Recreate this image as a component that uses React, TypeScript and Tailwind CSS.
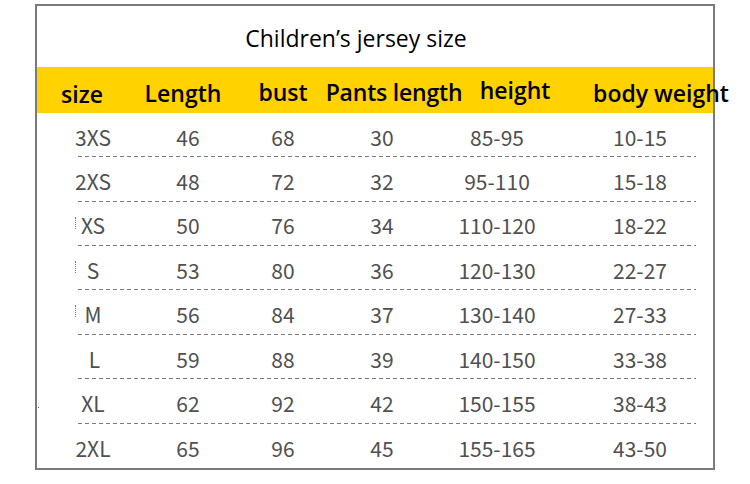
import React from "react";

const rows = [
  ["3XS", "46", "68", "30", "85-95", "10-15"],
  ["2XS", "48", "72", "32", "95-110", "15-18"],
  ["XS", "50", "76", "34", "110-120", "18-22"],
  ["S", "53", "80", "36", "120-130", "22-27"],
  ["M", "56", "84", "37", "130-140", "27-33"],
  ["L", "59", "88", "39", "140-150", "33-38"],
  ["XL", "62", "92", "42", "150-155", "38-43"],
  ["2XL", "65", "96", "45", "155-165", "43-50"],
];

const bodyW = ["w-[112px]", "w-[78px]", "w-[112px]", "w-[86px]", "w-[144px]", "w-[142px]"];

export default function App() {
  return (
    <div className="w-[750px] h-[484px] bg-white overflow-hidden">
      <div className="ml-[35px] mt-[4px] w-[680px] h-[466px] border-2 border-[#7a7a7a] flex flex-col">
        <div className="h-[61px] flex items-center justify-center pr-[38px] pt-[4px] font-['Open_Sans',sans-serif] font-medium text-[23px] text-black">
          Children’s jersey size
        </div>
        <div className="h-[46px] bg-[#ffd200] flex items-center font-['Open_Sans',sans-serif] font-semibold text-[23px] text-black leading-none whitespace-nowrap">
          <div className="w-[90px] shrink-0 text-center translate-y-[5px]">size</div>
          <div className="w-[112px] shrink-0 text-center translate-y-[4px]">Length</div>
          <div className="w-[88px] shrink-0 text-center translate-y-[3px]">bust</div>
          <div className="w-[134px] shrink-0 flex justify-center translate-y-[3px] tracking-[-0.2px]">Pants length</div>
          <div className="w-[108px] shrink-0 text-center translate-y-[1px]">height</div>
          <div className="w-[184px] shrink-0 text-center translate-y-[4px]">body weight</div>
        </div>
        <div className="flex flex-col font-['Noto_Sans_CJK_SC','Noto_Sans',sans-serif] text-[21px] text-[#505050] leading-none">
          {rows.map((r, i) => (
            <div key={i} className="h-[44.4px] flex flex-col">
              <div className="flex-1 flex items-center pt-[5px] relative">
                {r.map((c, j) => (
                  <div key={j} className={`${bodyW[j]} shrink-0 text-center`}>
                    {j === 0 && c === "L" ? <span className="pl-[3px]">{c}</span> : c}
                  </div>
                ))}
                {(i === 2 || i === 3 || i === 4) && (
                  <span className="absolute left-[38px] top-[15px] w-px h-[12px] border-l border-dotted border-[#777]" />
                )}
                {i === 6 && (
                  <span className="absolute left-[1px] top-[28px] w-px h-px bg-[#555]" />
                )}
              </div>
              {i < rows.length - 1 && (
                <div className="ml-[41px] w-[618px] h-px bg-[repeating-linear-gradient(90deg,#7a7a7a_0_4px,transparent_4px_7px)]" />
              )}
            </div>
          ))}
        </div>
      </div>
    </div>
  );
}
